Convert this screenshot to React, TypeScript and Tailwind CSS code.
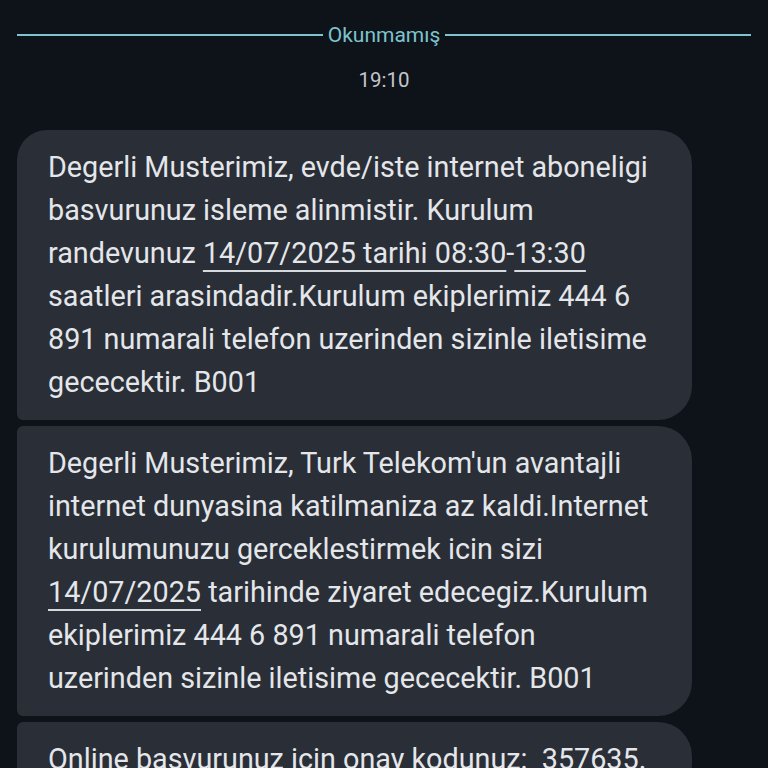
import React from "react";

const U = ({ children }: { children: React.ReactNode }) => (
  <span className="underline decoration-[2px] underline-offset-[7px] decoration-[#d5d8dd]">{children}</span>
);

const bubble =
  "w-[675px] bg-[#292e37] rounded-tr-[34px] rounded-br-[34px] pl-[31px] pt-[16px] pb-[16px] text-[28.75px] leading-[43px] text-[#e4e6ea] whitespace-nowrap";

export default function App() {
  return (
    <div
      className="w-[768px] h-[768px] overflow-hidden bg-[#0e131a] flex flex-col"
      style={{ fontFamily: "Roboto, 'Noto Sans', sans-serif" }}
    >
      <div className="flex items-center px-[17px] pt-[22px] h-[26px] box-content">
        <div className="flex-1 h-[2px] bg-[#7ec3cd]" />
        <span className="px-[5px] text-[21px] leading-[26px] text-[#7ec3cd]">Okunmamış</span>
        <div className="flex-1 h-[2px] bg-[#7ec3cd]" />
      </div>
      <div className="mt-[19px] text-center text-[20.5px] leading-[26px] text-[#c3c6cb]">19:10</div>
      <div className="mt-[37px] flex flex-col gap-[6px] pl-[17px]">
        <div className={`${bubble} rounded-tl-[30px] rounded-bl-[6px]`}>
          Degerli Musterimiz, evde/iste internet aboneligi<br />
          basvurunuz isleme alinmistir. Kurulum<br />
          randevunuz <U>14/07/2025 tarihi 08:30</U>-<U>13:30</U><br />
          saatleri arasindadir.Kurulum ekiplerimiz 444 6<br />
          891 numarali telefon uzerinden sizinle iletisime<br />
          gececektir. B001
        </div>
        <div className={`${bubble} rounded-tl-[6px] rounded-bl-[6px]`}>
          Degerli Musterimiz, Turk Telekom'un avantajli<br />
          internet dunyasina katilmaniza az kaldi.Internet<br />
          kurulumunuzu gerceklestirmek icin sizi<br />
          <U>14/07/2025</U> tarihinde ziyaret edecegiz.Kurulum<br />
          ekiplerimiz 444 6 891 numarali telefon<br />
          uzerinden sizinle iletisime gececektir. B001
        </div>
        <div className={`${bubble} rounded-tl-[6px] rounded-bl-[6px]`}>
          Online basvurunuz icin onay kodunuz:&nbsp; 357635.
        </div>
      </div>
    </div>
  );
}
